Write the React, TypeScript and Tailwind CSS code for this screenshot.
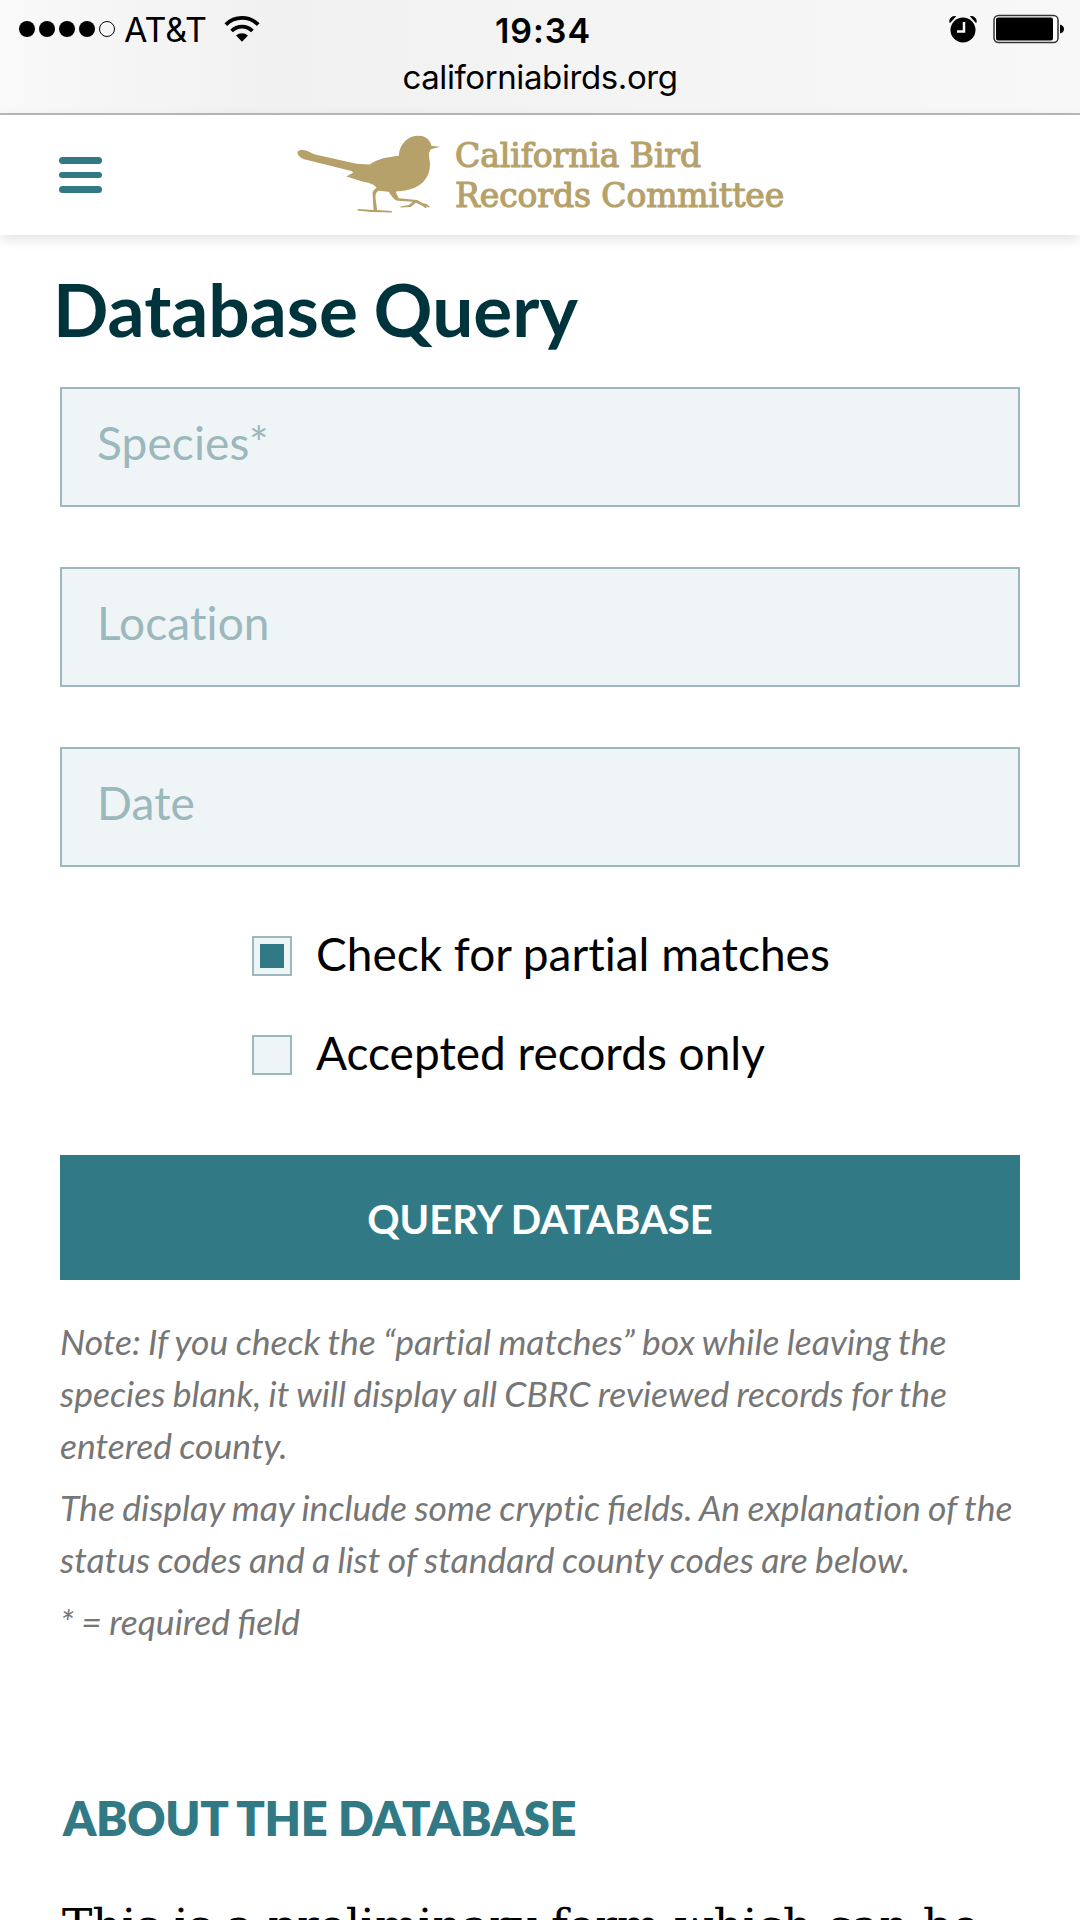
import React from "react";

function StatusBar() {
  return (
    <div className="h-[115px] shrink-0 border-b-2 border-[#b9bbba] bg-linear-to-r from-[#f9f9f9] via-[#f1f1f1] via-25% to-[#f8f8f8] text-black">
      <div className="grid h-14 grid-cols-3 items-center font-[Inter]">
        <div className="flex items-center pl-[19px] pt-[2px]">
          <div className="flex gap-[4px]">
            {[0, 1, 2, 3].map((i) => (
              <span key={i} className="size-4 rounded-full bg-black" />
            ))}
            <span className="size-4 rounded-full border border-black" />
          </div>
          <span className="ml-[9px] pt-[2px] text-[34px] leading-none tracking-[-0.1px]">AT&amp;T</span>
          <svg className="ml-[17px]" width="36" height="27" viewBox="0 0 36 27" fill="none" stroke="#000">
            <path d="M1.8 8.6A23 23 0 0 1 34.2 8.6" strokeWidth="3.8" />
            <path d="M7.6 15A14.6 14.6 0 0 1 28.4 15" strokeWidth="3.8" />
            <path d="M12 19.6a8.6 8.6 0 0 1 12 0l-6 6.2z" fill="#000" stroke="none" />
          </svg>
        </div>
        <div className="pl-[6px] pt-[5px] text-center text-[34px] font-semibold leading-none tracking-[1px]">19:34</div>
        <div className="flex items-center justify-end pr-[15px] pt-[2px]">
          <svg width="28" height="28" viewBox="0 0 28 28">
            <circle cx="14" cy="15" r="12.5" />
            <path d="M1 7.5C0 4 3 1 6.5 1.5zM27 7.5C28 4 25 1 21.5 1.5z" stroke="#000" />
            <path d="M15 7v9.5H8" fill="none" stroke="#f7f7f7" strokeWidth="2.5" />
          </svg>
          <svg className="ml-4" width="72" height="30" viewBox="0 0 72 30">
            <rect x="1" y="1.5" width="64" height="27" rx="4.5" fill="#fff" stroke="#333" strokeWidth="1.5" />
            <rect x="3" y="3.5" width="57" height="23" rx="2" />
            <path d="M67 10.5q4 1 4 4.5t-4 4.5z" />
          </svg>
        </div>
      </div>
      <div className="text-center font-[Inter] text-[33px] leading-[43px] tracking-[-0.4px]">californiabirds.org</div>
    </div>
  );
}

function Bird() {
  return (
    <svg width="145" height="81" viewBox="0 0 144 80" preserveAspectRatio="none" fill="#b6a16a">
      <path
        d="M7 0.7C12 1 15 4 20 5.5L60 14.5 73 15.2C82 9 91 8 102 6.5C103-6 112-13.5 122-13.2C129-13 133-9 134.5-3.5L143-2.5 134 0C131 4 132 7 133 13C134 30 122 41 101 41.5L99 42 102 48.5 118 50C121 50 123 51.5 125 53L130 54.5 133 57 131.5 57.5 129 56 130 58 128.5 58 125 55.5 119 53 114 57 104 57.5 103.5 56.5 112 55 116 52 101 51C98 51 94 45 92 42L82 41C78 43 79 48 79.5 52L80.5 60 95 61 95.5 62.5 74 62 61 60.5 61.5 59 77 60 76.5 52 76 43C76 41 78 40 80 38C77 34 71 33 66 32L50 27 57 23 55 21.5 8 10C4 8 0 5 2 2Q4 0 7 0.7Z"
        transform="translate(0 15)"
      />
    </svg>
  );
}

function Header() {
  return (
    <header className="flex h-[120px] shrink-0 items-start bg-white pl-[59px] shadow-[0_4px_12px_rgba(0,0,0,0.12)]">
      <button aria-label="Menu" className="mt-[42px] flex w-[43px] flex-col gap-[8px]">
        <span className="h-[6.5px] rounded-full bg-[#317984]" />
        <span className="h-[6.5px] rounded-full bg-[#317984]" />
        <span className="h-[6.5px] rounded-full bg-[#317984]" />
      </button>
      <div className="ml-[194px] mt-[19px]">
        <Bird />
      </div>
      <div className="ml-[14px] mt-[21px] whitespace-nowrap font-['DejaVu_Serif',serif] text-[33px] leading-[40px] tracking-[-0.1px] text-[#b6a16a] [-webkit-text-stroke:1.2px_#b6a16a]">
        <div>California Bird</div>
        <div>Records Committee</div>
      </div>
    </header>
  );
}

function Field({ label }: { label: string }) {
  return (
    <input
      aria-label={label}
      placeholder={label}
      className="block h-[120px] w-full border-2 border-[#9bb8bc] bg-[#eff4f7] pb-[10px] pl-[35px] text-[46px] tracking-[0.1px] [font-variant-ligatures:none] placeholder:text-[#9bb8bc] placeholder:opacity-100"
    />
  );
}

function Check({ label, checked }: { label: string; checked?: boolean }) {
  return (
    <div className="flex h-10 items-center">
      <span className="flex size-10 items-center justify-center border-2 border-[#9bb8bc] bg-[#eff4f7]">
        {checked && <span className="size-6 bg-[#317984]" />}
      </span>
      <span className="ml-6 pb-[5px] text-[46px] leading-none text-black [font-variant-ligatures:none]">{label}</span>
    </div>
  );
}

const Fi = () => <span className="[font-variant-ligatures:normal]">fi</span>;

export default function App() {
  return (
    <div className="flex h-[1920px] w-[1080px] flex-col overflow-hidden bg-white font-[Lato]">
      <StatusBar />
      <Header />
      <main className="px-[60px]">
        <h1 className="-ml-[7px] mt-[34px] text-[73px] font-bold leading-[80px] text-[#00343c] [word-spacing:-2px]">Database Query</h1>
        <form className="mt-[38px]">
          <div className="flex flex-col gap-[60px]">
            <Field label="Species*" />
            <Field label="Location" />
            <Field label="Date" />
          </div>
          <div className="ml-[192px] mt-[69px] flex flex-col gap-[59px]">
            <Check label="Check for partial matches" checked />
            <Check label="Accepted records only" />
          </div>
          <button type="button" className="mt-[80px] flex h-[125px] w-full items-center justify-center bg-[#317984] pt-[3px] text-[40px] font-bold text-white">
            QUERY DATABASE
          </button>
        </form>
        <div className="mt-[36px] flex flex-col gap-[10px] whitespace-nowrap text-[35.5px] italic leading-[52px] text-[#767676] [font-variant-ligatures:none] [word-spacing:-1px]">
          <p>
            Note: If you check the “partial matches” box while leaving the
            <br />
            species blank, it will display all CBRC reviewed records for the
            <br />
            entered county.
          </p>
          <p>
            The display may include some cryptic <Fi />elds. An explanation of the
            <br />
            status codes and a list of standard county codes are below.
          </p>
          <p>
            * = required <Fi />eld
          </p>
        </div>
        <h2 className="ml-[3px] mt-[140px] text-[47px] font-extrabold leading-[60px] tracking-[-0.3px] text-[#317984]">ABOUT THE DATABASE</h2>
        <p className="ml-[2px] mt-[42px] whitespace-nowrap font-['DejaVu_Serif',serif] text-[45.5px] leading-[72px] text-black">
          This is a preliminary form which can be
        </p>
      </main>
    </div>
  );
}
